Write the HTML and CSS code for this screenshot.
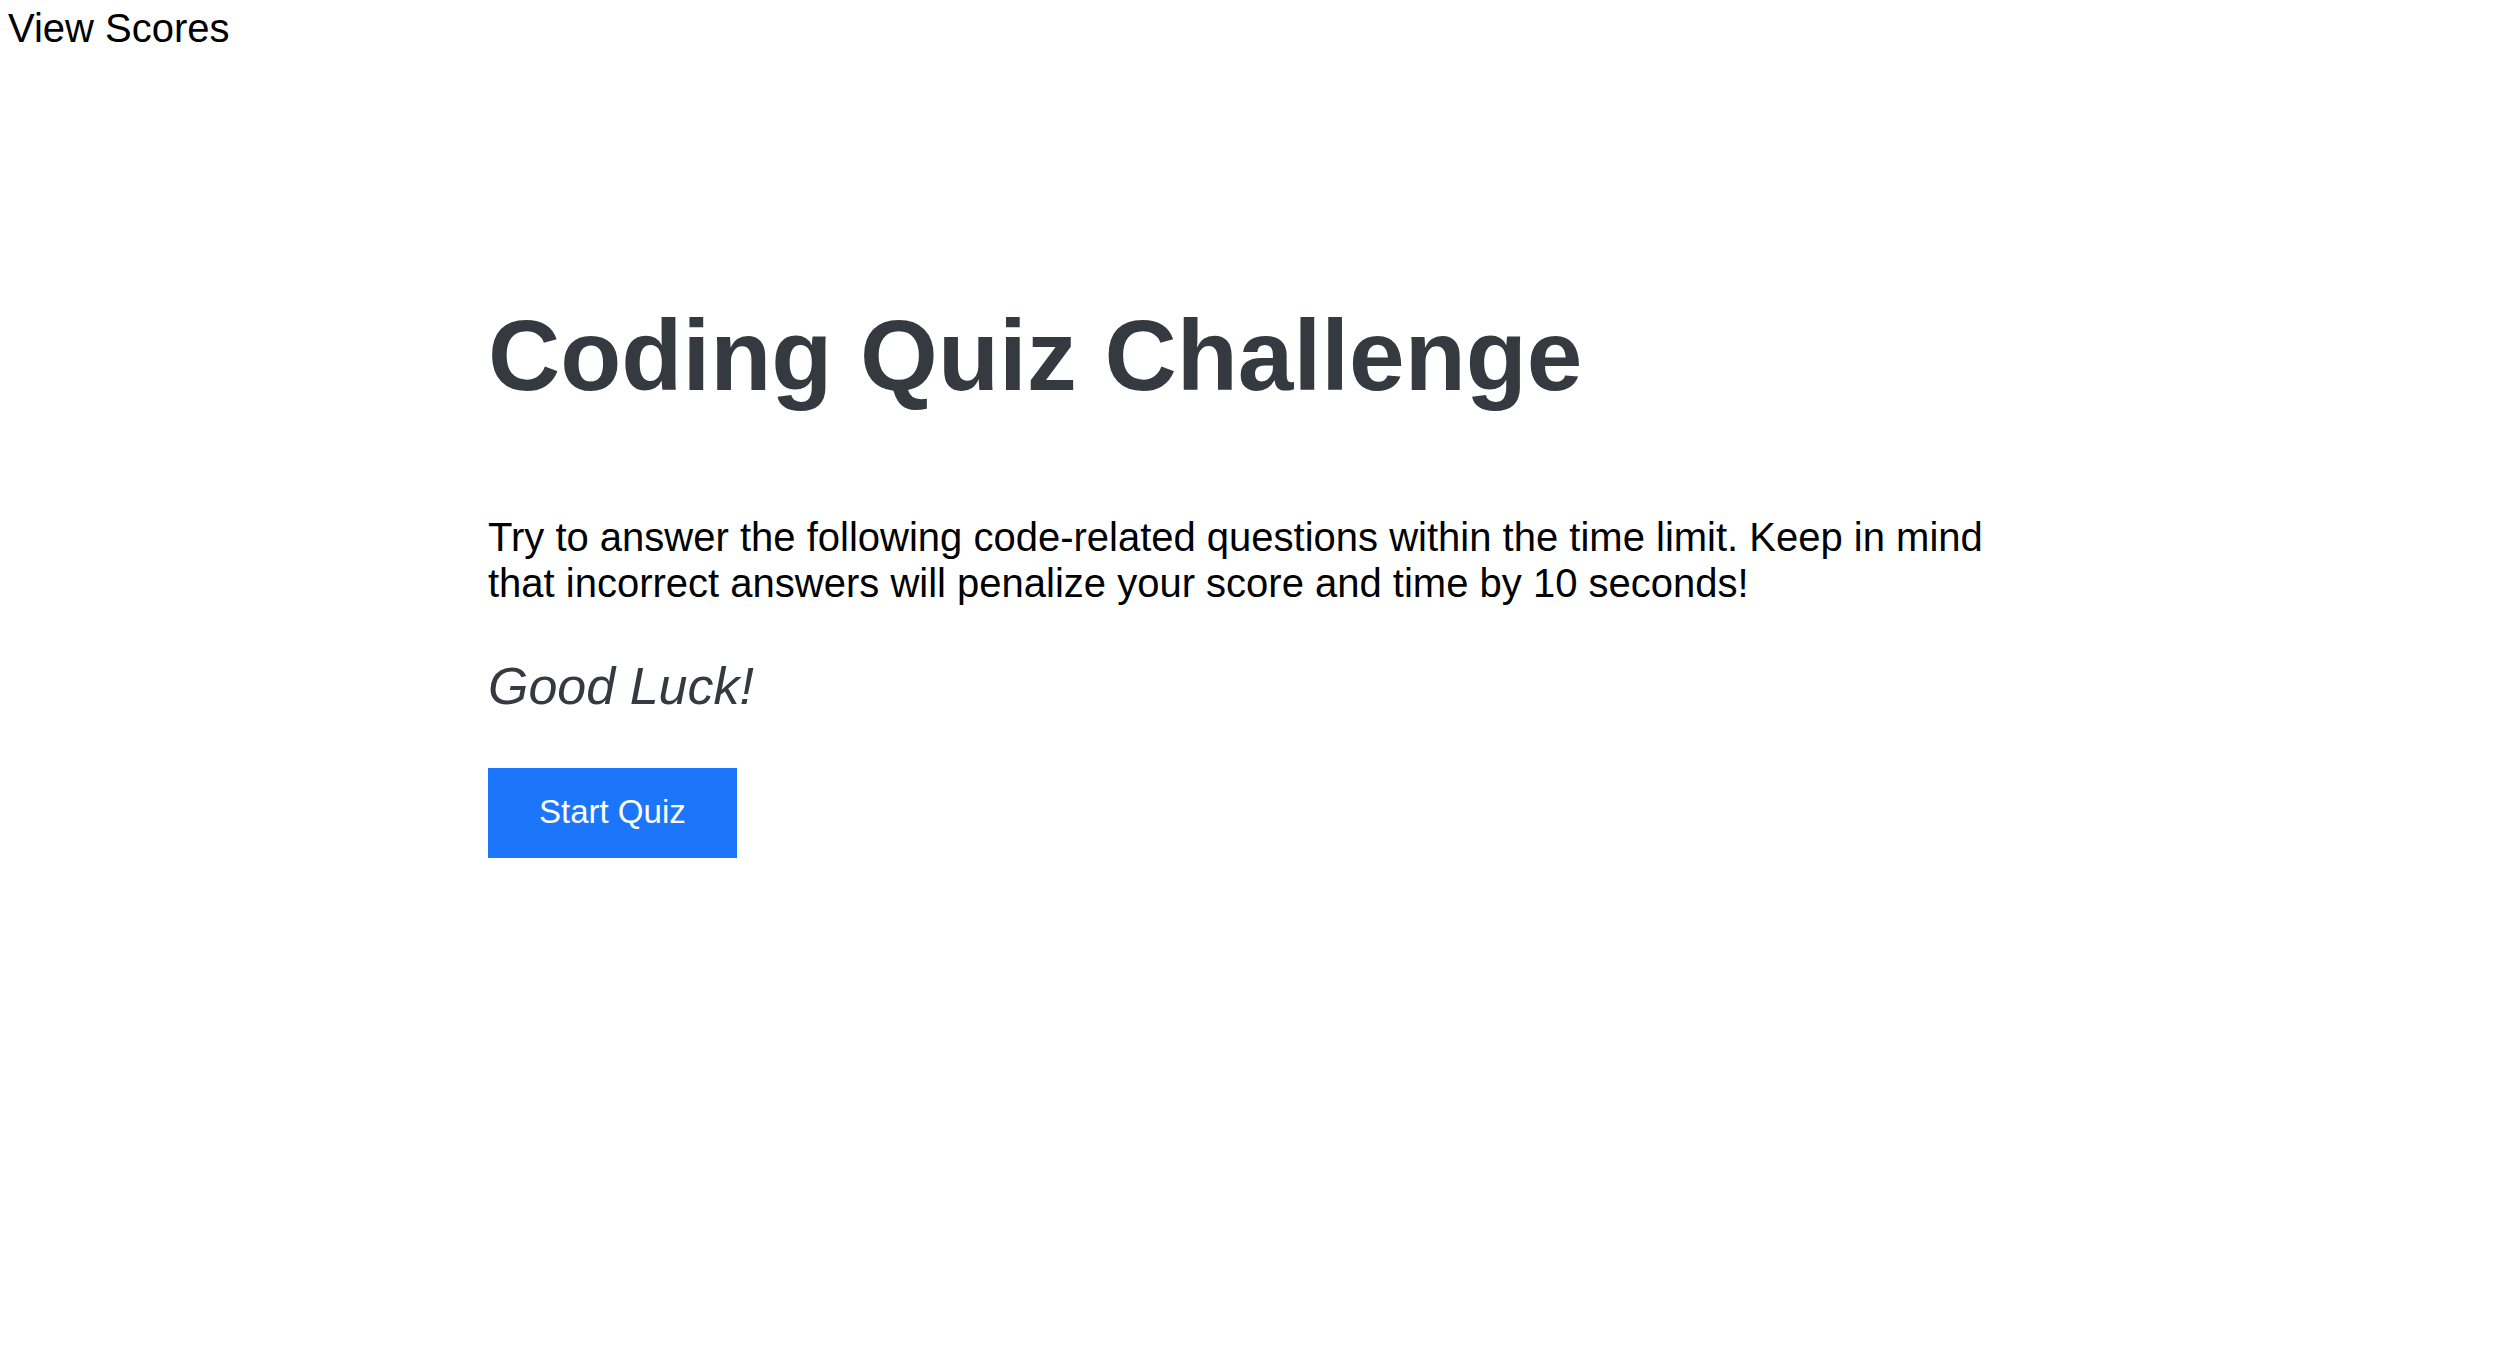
FILE: index.html
```html
<!DOCTYPE html>
<html lang="en">
<head>
<meta charset="utf-8">
<title>Coding Quiz Challenge</title>
<link rel="stylesheet" href="styles.css">
</head>
<body>
<header class="topbar">
  <a class="view-scores" href="#">View Scores</a>
</header>
<main class="container">
  <h1 class="title">Coding Quiz Challenge</h1>
  <p class="intro">Try to answer the following code-related questions within the time limit. Keep in mind that incorrect answers will penalize your score and time by 10 seconds!</p>
  <p class="luck">Good Luck!</p>
  <button class="start-btn" type="button">Start Quiz</button>
</main>
</body>
</html>
```

FILE: styles.css
```css
html, body {
  margin: 0;
  padding: 0;
  background: #ffffff;
}

body {
  font-family: "Liberation Sans", Arial, Helvetica, sans-serif;
  color: #000000;
}

.topbar {
  padding: 5px 0 0 8px;
}

.view-scores {
  display: inline-block;
  font-size: 40px;
  line-height: 46px;
  color: #000000;
  text-decoration: none;
}

.container {
  width: 1528px;
  margin: 0 auto;
  padding-top: 244px;
  display: flex;
  flex-direction: column;
  align-items: flex-start;
}

.title {
  margin: 0;
  font-size: 100px;
  font-weight: 700;
  line-height: 120px;
  color: #343a40;
}

.intro {
  margin: 99px 0 0 0;
  font-size: 40px;
  line-height: 46px;
  color: #000000;
}

.luck {
  margin: 49px 0 0 0;
  font-size: 52px;
  font-style: italic;
  line-height: 62px;
  color: #343a40;
}

.start-btn {
  margin-top: 51px;
  border: 0;
  border-radius: 0;
  background: #1c76fb;
  color: #ffffff;
  font-family: "Liberation Sans", Arial, Helvetica, sans-serif;
  font-size: 33px;
  line-height: 36px;
  padding: 26px 51px 28px;
  cursor: pointer;
}
```
